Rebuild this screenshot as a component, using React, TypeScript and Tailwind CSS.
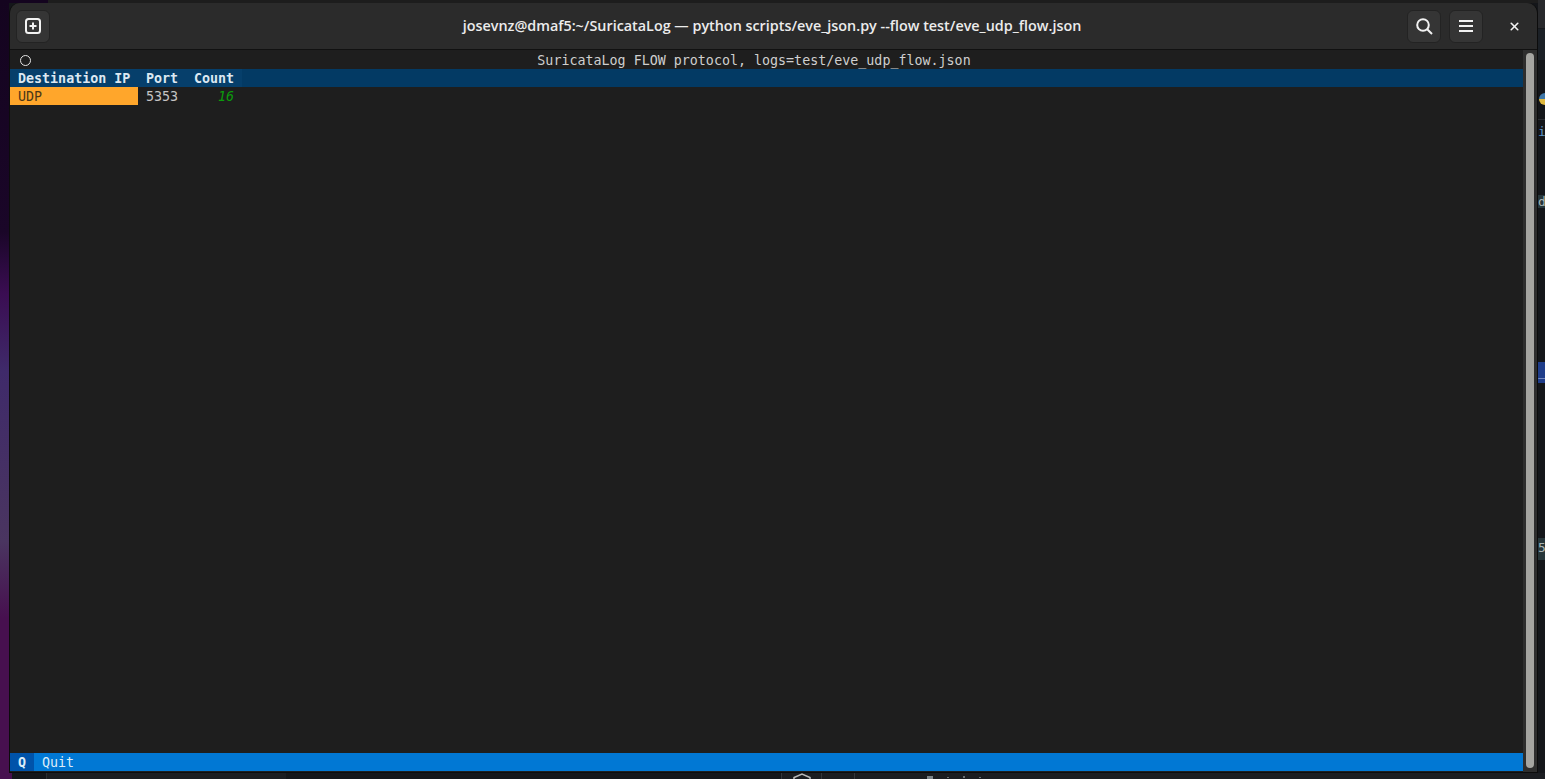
import { X } from 'lucide-react'

const mono = 'font-["DejaVu_Sans_Mono","Liberation_Mono",monospace] text-[13.33px] leading-[20px]'

function HeaderButton({ children }: { children: React.ReactNode }) {
  return (
    <div className="w-[34px] h-[33px] rounded-md bg-[#353535] border border-[#232323] flex items-center justify-center text-[#f2f2f2]">
      {children}
    </div>
  )
}

function NewTabIcon() {
  return (
    <svg width="16" height="16" viewBox="0 0 16 16" fill="none" stroke="currentColor">
      <rect x="1" y="1" width="14" height="14" rx="2.5" strokeWidth="2" />
      <path d="M8 4.5v7M4.5 8h7" strokeWidth="2" />
    </svg>
  )
}

function SearchIcon() {
  return (
    <svg width="17" height="17" viewBox="0 0 17 17" fill="none" stroke="currentColor" strokeWidth="2">
      <circle cx="7" cy="7" r="5.8" />
      <path d="M11.2 11.2L16 16" />
    </svg>
  )
}

function MenuIcon() {
  return (
    <svg width="14" height="12" viewBox="0 0 14 12" fill="none" stroke="currentColor" strokeWidth="2">
      <path d="M0 1h14M0 6h14M0 11h14" />
    </svg>
  )
}

function HeaderBar() {
  return (
    <div className="h-[47px] shrink-0 bg-[#2b2b2b] border-b border-[#111111] rounded-t-[10px] flex items-center pl-[6px] pr-[6px]">
      <HeaderButton>
        <NewTabIcon />
      </HeaderButton>
      <div className="flex-1 text-center font-['Open_Sans','Noto_Sans',sans-serif] font-semibold text-[14.37px] text-[#ececec] pl-[87px]">
        josevnz@dmaf5:~/SuricataLog — python scripts/eve_json.py --flow test/eve_udp_flow.json
      </div>
      <div className="flex items-center gap-2">
        <HeaderButton>
          <SearchIcon />
        </HeaderButton>
        <HeaderButton>
          <MenuIcon />
        </HeaderButton>
        <div className="w-[34px] ml-[6px] flex justify-center text-[#f2f2f2]">
          <X size={13} strokeWidth={3} />
        </div>
      </div>
    </div>
  )
}

function FlowTable() {
  return (
    <div className={mono}>
      <div className="h-[18px] flex items-start text-[#cfcfcf]">
        <div className="w-[30px] pt-[4px] flex justify-center">
          <div className="w-[11px] h-[11px] rounded-full border-[1.5px] border-[#e4e4e4]" />
        </div>
        <div className="flex-1 text-center pr-[55px]">SuricataLog FLOW protocol, logs=test/eve_udp_flow.json</div>
      </div>
      <div className="h-[18px] bg-[#033a64] flex font-bold text-[#dce8f2]">
        <div className="bg-[#063f6b] flex">
          <div className="w-[128px] pl-2">Destination IP</div>
          <div className="w-[48px] pl-2">Port</div>
          <div className="w-[56px] pl-2 pr-2 text-right">Count</div>
        </div>
      </div>
      <div className="h-[18px] flex">
        <div className="w-[128px] pl-2 bg-[#ffa62b] text-[#4a3818]">UDP</div>
        <div className="w-[48px] pl-2 text-[#c4c4c4]">5353</div>
        <div className="w-[56px] pr-2 text-right italic text-[#0c9a0c]">16</div>
      </div>
    </div>
  )
}

function FooterBar() {
  return (
    <div className={`${mono} h-[18px] bg-[#0178d4] flex text-[#dcecf8]`}>
      <div className="w-[24px] text-center font-bold bg-[#0053aa]">Q</div>
      <div className="pl-2">Quit</div>
    </div>
  )
}

function Scrollbar() {
  return (
    <div className="w-[14px] shrink-0 bg-[#2e2e2e] flex justify-center pt-[3px] pb-[4px]">
      <div className="w-[8px] h-full rounded-full bg-[#a5a5a1]" />
    </div>
  )
}

function BehindWindow() {
  return (
    <div className="flex-1 bg-[#14161a] flex flex-col font-['DejaVu_Sans_Mono',monospace] text-[13px] leading-[20px] overflow-hidden">
      <div className="h-[28px] shrink-0 bg-[#28292c]" />
      <div className="h-[32px] shrink-0 bg-[#1b2026] border-t border-[#17191c]" />
      <div className="h-[33px] shrink-0" />
      <div className="h-[12px] shrink-0 w-[8px] ml-[1px] rounded-l-full bg-[#3f77a8] border-b-[6px] border-[#e0b93e]" />
      <div className="h-[15px] shrink-0 border-b border-[#2a2d32]" />
      <div className="h-[20px] shrink-0 mt-[2px] text-[#5f93c7] whitespace-nowrap">id</div>
      <div className="h-[53px] shrink-0" />
      <div className="h-[13px] shrink-0 w-full bg-[#27363a] text-[#a9b4b4] leading-[13px] whitespace-nowrap">ds</div>
      <div className="h-[154px] shrink-0" />
      <div className="h-[21px] shrink-0 w-full bg-[#1f3d8a] text-[#b5bfdc] whitespace-nowrap">_</div>
      <div className="h-[155px] shrink-0" />
      <div className="h-[22px] shrink-0 w-full bg-[#27363a] text-[#a9b4b4] whitespace-nowrap">51</div>
    </div>
  )
}

function BottomStrip() {
  return (
    <div className="h-[6px] shrink-0 flex bg-[#14161a]">
      <div className="w-[12px] bg-[#47104f]" />
      <div className="w-[34px]" />
      <div className="w-[240px] bg-[#1b1d21] border-l border-[#2b2d31]" />
      <div className="w-[495px] bg-[#14161a]" />
      <div className="w-[41px] bg-[#1b1d21] border-x border-[#33363b] flex justify-center overflow-hidden">
        <svg width="18" height="6" viewBox="0 0 18 6" fill="none" stroke="#b8b8b8" strokeWidth="1.5">
          <path d="M1 6V4.5L9 1l8 3.5V6" />
        </svg>
      </div>
      <div className="w-[33px] bg-[#1b1d21] border-r border-[#33363b]" />
      <div className="flex-1 bg-[#1b1d21] pl-[72px] pt-[3px] flex items-start gap-[14px]">
        <div className="w-[6px] h-[3px] bg-[#7d8489]" />
        <div className="w-[2px] h-[1px] mt-[1px] bg-[#6a6f73]" />
        <div className="w-[2px] h-[2px] bg-[#6a6f73]" />
        <div className="w-[2px] h-[1px] mt-[1px] bg-[#6a6f73]" />
      </div>
    </div>
  )
}

export default function App() {
  return (
    <div className="w-[1545px] h-[779px] overflow-hidden flex flex-col bg-[#14161a]">
      <div className="h-[773px] flex shrink-0">
        <div className="w-[9px] shrink-0 bg-[linear-gradient(to_bottom,#14041f_0%,#1a0628_30%,#3a0d52_38%,#3f2a6a_48%,#4a3560_70%,#47104f_80%,#47104f_100%)]" />
        <div className="w-[1529px] shrink-0 flex flex-col relative">
          <div className="h-[3px] shrink-0 flex bg-[#1d1d1d]">
            <div className="w-[39px] bg-[#14041f]" />
          </div>
          <div className="flex-1 min-h-0 flex flex-col border border-t-0 border-[#0c0c0c] rounded-t-[10px] bg-[#1e1e1e]">
            <HeaderBar />
            <div className="flex-1 min-h-0 flex">
              <div className="flex-1 flex flex-col pb-[1px] pt-[1px]">
                <div className="flex-1">
                  <FlowTable />
                </div>
                <FooterBar />
              </div>
              <Scrollbar />
            </div>
          </div>
        </div>
        <BehindWindow />
      </div>
      <BottomStrip />
    </div>
  )
}
